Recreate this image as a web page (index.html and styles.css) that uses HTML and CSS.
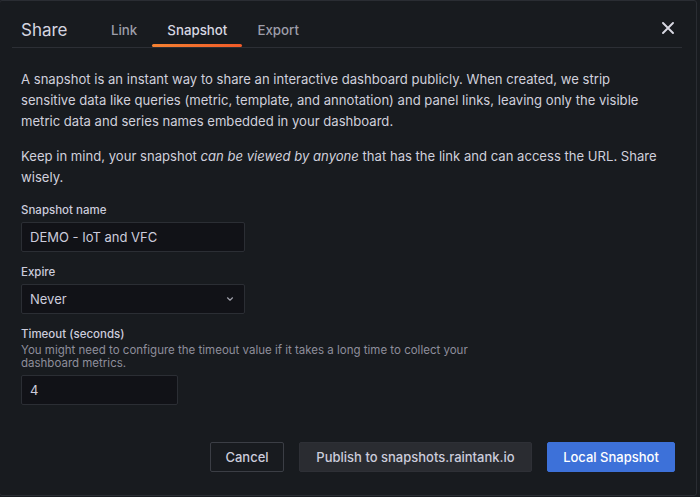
FILE: index.html
```html
<!DOCTYPE html>
<html lang="en">
<head>
<meta charset="utf-8">
<title>Share</title>
<link rel="stylesheet" href="styles.css">
</head>
<body>
<div class="modal">
  <div class="modal-header">
    <h2 class="modal-title">Share</h2>
    <nav class="tabs">
      <a class="tab">Link</a>
      <a class="tab active">Snapshot</a>
      <a class="tab">Export</a>
    </nav>
    <button class="close" aria-label="Close">
      <svg width="12" height="12" viewBox="0 0 12 12"><path d="M1 1L11 11M11 1L1 11" stroke="currentColor" stroke-width="1.9" stroke-linecap="round"/></svg>
    </button>
  </div>
  <div class="modal-body">
    <p class="text">A snapshot is an instant way to share an interactive dashboard publicly. When created, we strip sensitive data like queries (metric, template, and annotation) and panel links, leaving only the visible metric data and series names embedded in your dashboard.</p>
    <p class="text">Keep in mind, your snapshot <em>can be viewed by anyone</em> that has the link and can access the URL. Share wisely.</p>

    <div class="field">
      <label class="label">Snapshot name</label>
      <div class="input wide">DEMO - IoT and VFC</div>
    </div>
    <div class="field">
      <label class="label">Expire</label>
      <div class="input wide select">
        <span>Never</span>
        <svg width="10" height="10" viewBox="0 0 10 10"><path d="M2.5 3.8L5 6.2L7.5 3.8" fill="none" stroke="currentColor" stroke-width="1.2" stroke-linecap="round" stroke-linejoin="round"/></svg>
      </div>
    </div>
    <div class="field">
      <label class="label">Timeout (seconds)</label>
      <div class="description">You might need to configure the timeout value if it takes a long time to collect your dashboard metrics.</div>
      <div class="input narrow">4</div>
    </div>

    <div class="actions">
      <button class="btn secondary-outline">Cancel</button>
      <button class="btn secondary">Publish to snapshots.raintank.io</button>
      <button class="btn primary">Local Snapshot</button>
    </div>
  </div>
</div>
</body>
</html>
```
FILE: styles.css
```css
* { box-sizing: border-box; }
html, body {
  margin: 0;
  padding: 0;
  background: #181b1f;
  height: 100%;
  overflow: hidden;
}
body {
  font-family: Inter, "Noto Sans", sans-serif;
  color: #ccccdc;
}
.modal {
  width: 698px;
  height: 496px;
  margin-left: -1px;
  background: #181b1f;
  border: 1px solid #2a2d33;
  border-radius: 3px;
  display: flex;
  flex-direction: column;
}
.modal-header {
  margin: 0 14px 0 12px;
  height: 47px;
  border-bottom: 1px solid #2c2f35;
  display: flex;
  align-items: flex-end;
}
.modal-title {
  margin: 0 0 6px 9px;
  font-size: 17px;
  font-weight: 400;
  line-height: 22px;
  color: #d5d5e0;
  width: 75px;
}
.tabs {
  display: flex;
  height: 100%;
  align-items: stretch;
}
.tab {
  position: relative;
  padding: 0 15px;
  font-size: 13.3px;
  font-weight: 500;
  color: #9d9ea9;
  display: flex;
  align-items: center;
  padding-top: 11px;
}
.tab.active {
  color: #d8d8e2;
}
.tab.active::after {
  content: "";
  position: absolute;
  left: 0;
  right: 0;
  bottom: 0;
  height: 3px;
  border-radius: 2px;
  background: linear-gradient(90deg, #f58232, #f05a28);
}
.close {
  margin-left: auto;
  margin-bottom: 13px;
  margin-right: 8px;
  background: none;
  border: none;
  padding: 0;
  color: #d8d8e2;
  display: flex;
  align-self: flex-end;
}
.modal-body {
  padding: 21px 21px 0 21px;
  flex: 1;
  display: flex;
  flex-direction: column;
}
.text {
  margin: 0 0 14px;
  font-size: 13.1px;
  line-height: 21px;
  max-width: 642px;
  color: #d0d0dc;
}
.text em { font-style: italic; }
.field {
  display: flex;
  flex-direction: column;
  align-items: flex-start;
  margin-bottom: 12px;
}
.label {
  font-size: 11.5px;
  font-weight: 500;
  line-height: 16px;
  color: #ccccdc;
  margin-bottom: 4px;
}
.description {
  font-size: 11.5px;
  line-height: 13px;
  color: #8e8e9b;
  max-width: 480px;
  margin-top: -2px;
  margin-bottom: 5px;
}
.input {
  height: 30px;
  background: #111217;
  border: 1px solid #2b2e34;
  border-radius: 2px;
  font-size: 13px;
  color: #ccccdc;
  padding: 0 8px;
  display: flex;
  align-items: center;
}
.input.wide { width: 224px; }
.input.narrow { width: 157px; }
.select {
  justify-content: space-between;
  padding-right: 9px;
}
.select svg { color: #a0a1ab; }
.actions {
  margin-top: auto;
  margin-bottom: 23px;
  display: flex;
  justify-content: flex-end;
  gap: 15px;
}
.btn {
  height: 30px;
  font-family: inherit;
  font-size: 13px;
  font-weight: 500;
  border-radius: 2px;
  padding: 0;
  white-space: nowrap;
  cursor: pointer;
}
.secondary-outline {
  background: transparent;
  border: 1px solid #3b3e45;
  color: #ccccdc;
  width: 74px;
}
.secondary {
  background: #2a2c31;
  border: 1px solid #2e3036;
  color: #ccccdc;
  width: 233px;
}
.primary {
  background: #3d71d9;
  border: 1px solid #3d71d9;
  color: #ffffff;
  width: 128px;
}
```
